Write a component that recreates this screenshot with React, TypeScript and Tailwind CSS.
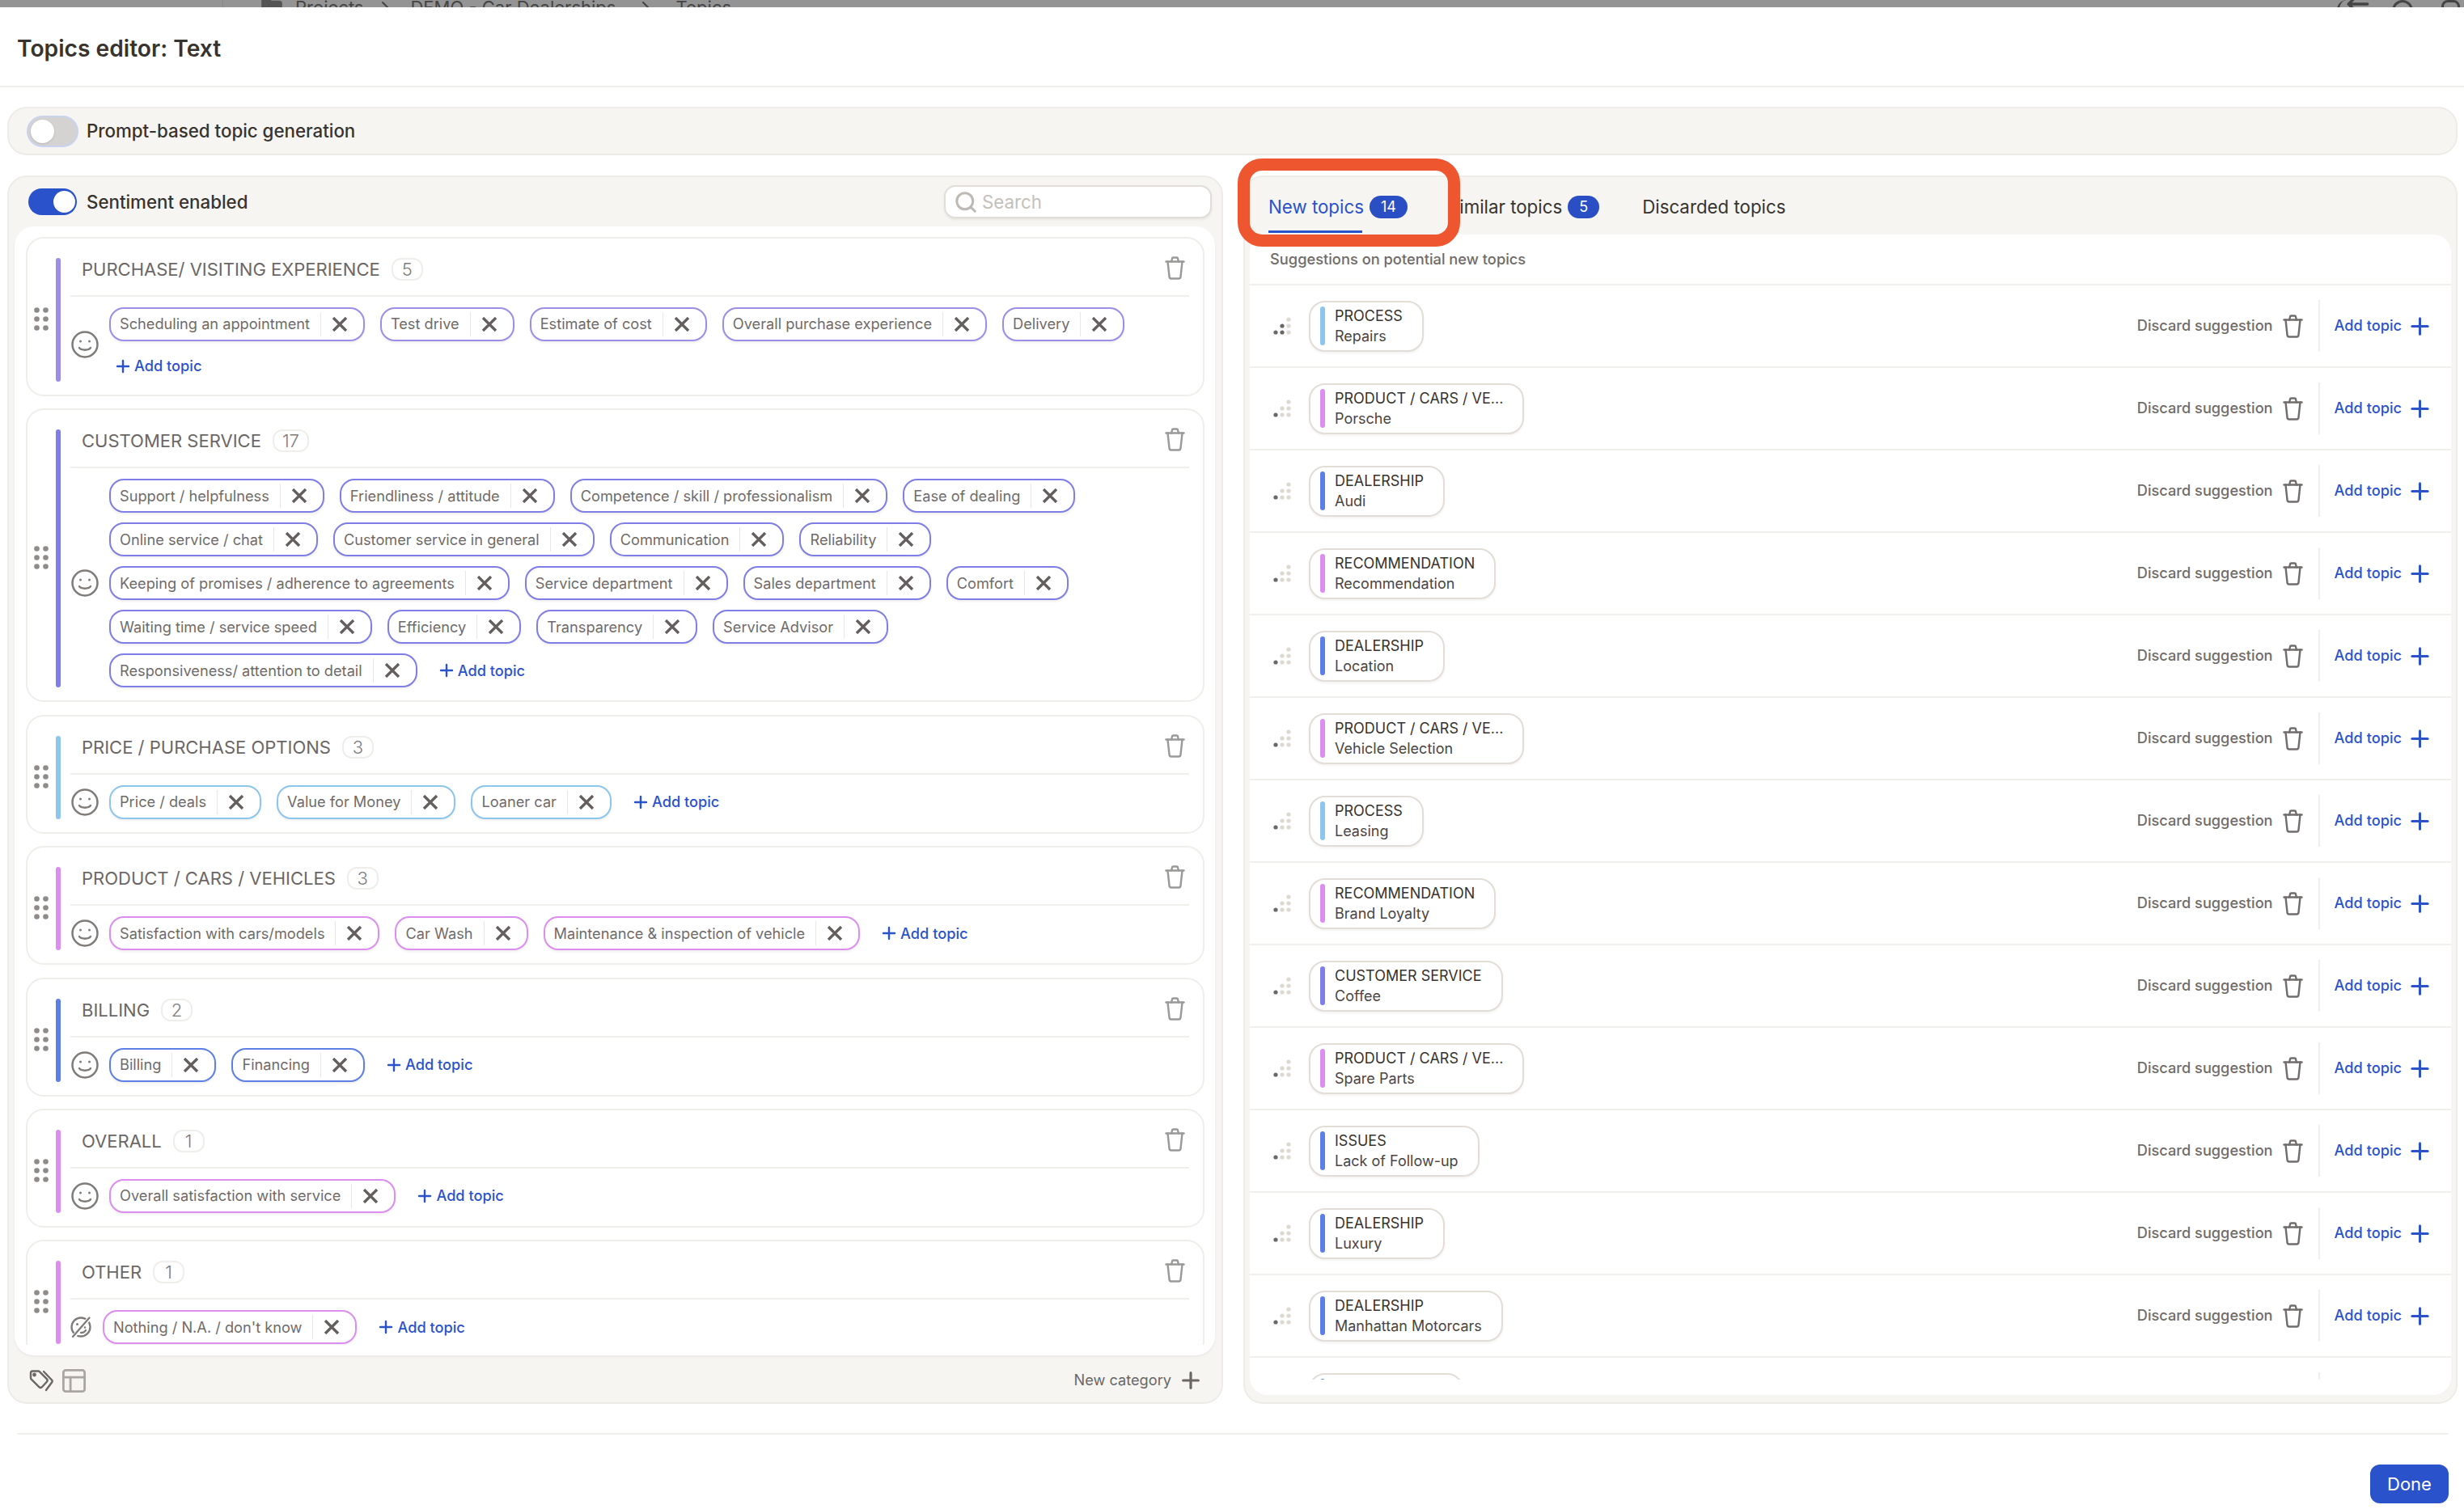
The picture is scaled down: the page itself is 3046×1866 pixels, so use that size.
import { ArrowLeft, ChevronRight, Folder, PanelsTopLeft, Plus, Search } from "lucide-react";

type Category = {
    name: string;
    count: number;
    bar: string;
    border: string;
    topics: string[];
    noSentiment?: boolean;
};

const categories: Category[] = [
    {
        name: "PURCHASE/ VISITING EXPERIENCE",
        count: 5,
        bar: "bg-[#9c8de8]",
        border: "border-[#9c8de8]",
        topics: ["Scheduling an appointment", "Test drive", "Estimate of cost", "Overall purchase experience", "Delivery"],
    },
    {
        name: "CUSTOMER SERVICE",
        count: 17,
        bar: "bg-[#7f7de6]",
        border: "border-[#7f7de6]",
        topics: [
            "Support / helpfulness",
            "Friendliness / attitude",
            "Competence / skill / professionalism",
            "Ease of dealing",
            "Online service / chat",
            "Customer service in general",
            "Communication",
            "Reliability",
            "Keeping of promises / adherence to agreements",
            "Service department",
            "Sales department",
            "Comfort",
            "Waiting time / service speed",
            "Efficiency",
            "Transparency",
            "Service Advisor",
            "Responsiveness/ attention to detail",
        ],
    },
    {
        name: "PRICE / PURCHASE OPTIONS",
        count: 3,
        bar: "bg-[#8cc6ec]",
        border: "border-[#8cc6ec]",
        topics: ["Price / deals", "Value for Money", "Loaner car"],
    },
    {
        name: "PRODUCT / CARS / VEHICLES",
        count: 3,
        bar: "bg-[#dc8df0]",
        border: "border-[#dc8df0]",
        topics: ["Satisfaction with cars/models", "Car Wash", "Maintenance & inspection of vehicle"],
    },
    {
        name: "BILLING",
        count: 2,
        bar: "bg-[#5c7fe6]",
        border: "border-[#5c7fe6]",
        topics: ["Billing", "Financing"],
    },
    {
        name: "OVERALL",
        count: 1,
        bar: "bg-[#dc8df0]",
        border: "border-[#dc8df0]",
        topics: ["Overall satisfaction with service"],
    },
    {
        name: "OTHER",
        count: 1,
        bar: "bg-[#dc8df0]",
        border: "border-[#dc8df0]",
        topics: ["Nothing / N.A. / don't know"],
        noSentiment: true,
    },
];

const suggestions = [
    { cat: "PROCESS", topic: "Repairs", bar: "bg-[#8cc6ec]", strength: 3 },
    { cat: "PRODUCT / CARS / VE...", topic: "Porsche", bar: "bg-[#dc8df0]", strength: 1 },
    { cat: "DEALERSHIP", topic: "Audi", bar: "bg-[#5c7fe6]", strength: 1 },
    { cat: "RECOMMENDATION", topic: "Recommendation", bar: "bg-[#dc8df0]", strength: 1 },
    { cat: "DEALERSHIP", topic: "Location", bar: "bg-[#5c7fe6]", strength: 1 },
    { cat: "PRODUCT / CARS / VE...", topic: "Vehicle Selection", bar: "bg-[#dc8df0]", strength: 1 },
    { cat: "PROCESS", topic: "Leasing", bar: "bg-[#8cc6ec]", strength: 1 },
    { cat: "RECOMMENDATION", topic: "Brand Loyalty", bar: "bg-[#dc8df0]", strength: 1 },
    { cat: "CUSTOMER SERVICE", topic: "Coffee", bar: "bg-[#7f7de6]", strength: 1 },
    { cat: "PRODUCT / CARS / VE...", topic: "Spare Parts", bar: "bg-[#dc8df0]", strength: 1 },
    { cat: "ISSUES", topic: "Lack of Follow-up", bar: "bg-[#5c7fe6]", strength: 1 },
    { cat: "DEALERSHIP", topic: "Luxury", bar: "bg-[#5c7fe6]", strength: 1 },
    { cat: "DEALERSHIP", topic: "Manhattan Motorcars", bar: "bg-[#5c7fe6]", strength: 1 },
    { cat: "ISSUES", topic: "Communication", bar: "bg-[#5c7fe6]", strength: 1 },
];

function TrashIcon({ className }: { className: string }) {
    return (
        <svg viewBox="0 0 25 29" fill="none" stroke="currentColor" strokeWidth="2.4" strokeLinecap="round" strokeLinejoin="round" className={className}>
            <path d="M1.5 6.5h22" />
            <path d="M3.5 6.5 5.5 25a2.5 2.5 0 0 0 2.5 2.5h9a2.5 2.5 0 0 0 2.5-2.5l2-18.5" />
            <path d="M8 6.5 9 3a1.5 1.5 0 0 1 1.5-1.5h4A1.5 1.5 0 0 1 16 3l1 3.5" />
        </svg>
    );
}

function DragDots() {
    return (
        <svg viewBox="0 0 18 29" className="-mt-[2px] h-[29px] w-[18px] fill-[#8f8b89]">
            {[3.5, 14.5].map((x) =>
                [3.5, 14.5, 25.5].map((y) => <circle key={`${x}-${y}`} cx={x} cy={y} r="3.3" />)
            )}
        </svg>
    );
}

function Smiley() {
    return (
        <svg viewBox="0 0 34 34" fill="none" stroke="#7f7b79" strokeWidth="2.5" strokeLinecap="round" className="ml-px h-[34px] w-[34px] shrink-0">
            <circle cx="17" cy="17" r="15.5" />
            <circle cx="11.5" cy="13" r="1.5" fill="#7f7b79" stroke="none" />
            <circle cx="22.5" cy="13" r="1.5" fill="#7f7b79" stroke="none" />
            <path d="M10 21c2 3.5 12 3.5 14 0" />
        </svg>
    );
}

function SmileyOff() {
    return (
        <svg viewBox="0 0 26 28" fill="none" stroke="#7f7b79" strokeWidth="2.3" strokeLinecap="round" className="h-[28px] w-[26px] shrink-0">
            <circle cx="13" cy="14" r="11.5" />
            <path d="M25 1 3 27" stroke="#ffffff" strokeWidth="5" />
            <path d="M23.5 2.5 3 26" />
            <circle cx="8.5" cy="10.5" r="1.5" fill="#7f7b79" stroke="none" />
            <circle cx="18" cy="14.5" r="1.3" fill="#7f7b79" stroke="none" />
            <path d="M13 21c2.5 0 5-1 6-3" />
        </svg>
    );
}

function Chip({ label, border }: { label: string; border: string }) {
    return (
        <div className={`flex h-[42px] items-center rounded-[18px] border-2 bg-white pl-[11px] pr-[19px] shadow-[0_2px_3px_rgba(60,50,40,0.08)] ${border}`}>
            <span className="text-[18.2px] text-[#6f6b6a]">{label}</span>
            <span className="ml-[13px] mr-[13px] h-[30px] w-px bg-[#e9e7e4]" />
            <svg viewBox="0 0 20 18" fill="none" stroke="#645f5e" strokeWidth="3.4" className="h-[18px] w-[20px]">
                <path d="M2 1l16 16M18 1 2 17" />
            </svg>
        </div>
    );
}

function AddTopic() {
    return (
        <div className="flex h-[38px] items-center gap-[2px] pl-[5px] text-[18.2px] font-medium text-[#2a52cb]">
            <Plus size={24} strokeWidth={2.4} />
            <span>Add topic</span>
        </div>
    );
}

function CategoryCard({ cat }: { cat: Category }) {
    return (
        <div className="flex shrink-0 rounded-[22px] border-2 border-[#f0eeea] bg-white pb-[16px] pt-[24px]">
            <div className="flex w-[35px] items-center justify-center pr-[2px]">
                <DragDots />
            </div>
            <div className={`w-[6px] rounded-full ${cat.bar}`} />
            <div className="ml-[12px] mr-[17px] flex-1">
                <div className="flex h-[48px] items-start justify-between border-b-2 border-[#f1efec] pl-[14px] pr-[5px]">
                    <div className="flex items-center gap-[14px]">
                        <span className="text-[22px] leading-[28px] text-[#6b6766]">{cat.name}</span>
                        <span className="flex h-[28px] min-w-[39px] items-center justify-center rounded-[12px] border-2 border-[#f0eeea] px-[10px] text-[22px] font-light leading-none text-[#7f7b79]">
                            {cat.count}
                        </span>
                    </div>
                    <TrashIcon className="-mt-[2px] h-[29px] w-[25px] text-[#9a9998]" />
                </div>
                <div className={`flex items-center pt-[13px] ${cat.noSentiment ? "gap-[14px]" : "gap-[13px]"}`}>
                    {cat.noSentiment ? <SmileyOff /> : <Smiley />}
                    <div className="flex flex-1 flex-wrap items-center gap-x-[19px] gap-y-[12px]">
                        {cat.topics.map((t) => (
                            <Chip key={t} label={t} border={cat.border} />
                        ))}
                        <AddTopic />
                    </div>
                </div>
            </div>
        </div>
    );
}

function StrengthDots({ strength }: { strength: number }) {
    const dots = [
        [4, 20],
        [12, 20],
        [12, 12],
        [20, 20],
        [20, 12],
        [20, 4],
    ];
    return (
        <svg viewBox="0 0 24 24" className="h-[24px] w-[24px] shrink-0">
            {dots.map(([x, y], i) => (
                <circle key={i} cx={x} cy={y} r="2.6" fill={i < strength ? "#6b6766" : "#ddd8d0"} />
            ))}
        </svg>
    );
}

function SuggestionRow({ s }: { s: (typeof suggestions)[number] }) {
    return (
        <div className="flex h-[102px] shrink-0 items-center border-b-2 border-[#f1efec] pl-[28px] pr-[22px]">
            <StrengthDots strength={s.strength} />
            <div className="ml-[21px] flex h-[63px] items-center rounded-[20px] border-2 border-[#e2ddd7] bg-white pl-[12px] pr-[24px] shadow-[0_2px_3px_rgba(60,50,40,0.06)]">
                <div className={`h-[48px] w-[6px] rounded-full ${s.bar}`} />
                <div className="ml-[12px] text-[18px] leading-[25px] text-[#4a4543]">
                    <div className="text-[#37332f]">{s.cat}</div>
                    <div>{s.topic}</div>
                </div>
            </div>
            <div className="ml-auto flex items-center">
                <span className="text-[18.2px] font-medium text-[#706c6b]">Discard suggestion</span>
                <TrashIcon className="ml-[12px] h-[29px] w-[25px] text-[#716d6c]" />
                <span className="ml-[19px] h-[64px] w-[2px] bg-[#f1efec]" />
                <span className="ml-[18px] text-[18.2px] font-medium text-[#2a52cb]">Add topic</span>
                <Plus size={33} strokeWidth={2.2} className="ml-[6px] text-[#2a52cb]" />
            </div>
        </div>
    );
}

function CountBadge({ n, wide }: { n: number; wide?: boolean }) {
    return (
        <span className={`flex h-[28px] items-center justify-center rounded-full bg-[#2a4fc4] text-[18px] leading-none text-white ${wide ? "w-[47px]" : "w-[39px]"}`}>
            {n}
        </span>
    );
}

export default function App() {
    return (
        <div className="relative flex h-[1866px] w-[3046px] flex-col overflow-hidden bg-white font-['Inter',sans-serif]">
            {/* page behind the modal */}
            <div className="flex h-[9px] shrink-0 items-start overflow-hidden bg-[#949494] text-[22px] leading-[22px] text-[#444]">
                <div className="h-full w-[276px] border-r border-[#888]" />
                <div className="-mt-[5px] ml-[46px] flex items-center gap-[15px]">
                    <Folder size={28} fill="#555" stroke="#555" />
                    <span>Projects</span>
                    <ChevronRight size={24} />
                    <span className="ml-[4px]">DEMO - Car Dealerships</span>
                    <ChevronRight size={24} className="ml-[10px]" />
                    <span className="ml-[10px]">Topics</span>
                </div>
                <div className="ml-auto mr-[5px] flex items-start">
                    <span className="h-[28px] w-[12px] rounded-l-full border-l-[3px] border-[#444]" />
                    <ArrowLeft size={40} className="-ml-[6px] -mt-[15px]" />
                    <span className="ml-[22px] h-[28px] w-[26px] rounded-full border-[3px] border-[#444]" />
                    <span className="ml-[35px] h-[28px] w-[23px] rounded-[8px] border-[3px] border-[#444]" />
                </div>
            </div>

            <div className="flex h-[99px] shrink-0 items-center border-b-2 border-[#f1efec] pl-[21px] pt-[5px]">
                <h1 className="text-[28.2px] font-semibold text-[#37332f]">Topics editor: Text</h1>
            </div>

            <div className="ml-[9px] mr-[8px] mt-[24px] flex h-[60px] shrink-0 items-center gap-[10px] rounded-[24px] border-2 border-[#efece7] bg-[#f6f5f2] pl-[22px]">
                <div className="flex h-[39px] w-[64px] items-center rounded-full border-2 border-[#c9d3ef] bg-[#d4d3d1] pl-[3px]">
                    <span className="h-[29px] w-[29px] rounded-full bg-white shadow" />
                </div>
                <span className="text-[22.3px] font-medium text-[#37332f]">Prompt-based topic generation</span>
            </div>

            <div className="ml-[9px] mr-[8px] mt-[25px] flex h-[1519px] shrink-0 gap-[25px]">
                {/* categories */}
                <div className="flex w-[1503px] flex-col rounded-[24px] border-2 border-[#efece7] bg-[#f6f5f2]">
                    <div className="flex h-[61px] shrink-0 items-center justify-between pl-[24px] pr-[12px]">
                        <div className="flex items-center gap-[12px]">
                            <div className="flex h-[33px] w-[60px] items-center justify-end rounded-full bg-[#2a52cb] pr-[2px]">
                                <span className="h-[27px] w-[27px] rounded-full bg-white" />
                            </div>
                            <span className="text-[22.3px] font-medium text-[#37332f]">Sentiment enabled</span>
                        </div>
                        <div className="flex h-[41px] w-[331px] items-center gap-[5px] rounded-[14px] border-2 border-[#e2ddd7] bg-white pl-[10px] shadow-[0_2px_3px_rgba(60,50,40,0.08)]">
                            <Search size={30} strokeWidth={2.4} className="text-[#bdbab5]" />
                            <span className="text-[22.3px] text-[#c4c0ba]">Search</span>
                        </div>
                    </div>
                    <div className="ml-[7px] mr-[8px] min-h-0 flex-1 rounded-[24px] bg-white pb-[13px] pl-[14px] pr-[13px] pt-[13px] shadow-[0_2px_3px_rgba(60,50,40,0.06)]">
                        <div className="flex h-full flex-col gap-[15.4px] overflow-hidden">
                            {categories.map((c) => (
                                <CategoryCard key={c.name} cat={c} />
                            ))}
                        </div>
                    </div>
                    <div className="flex h-[58px] shrink-0 items-center pl-[25px] pr-[22px] pt-[4px]">
                        <svg viewBox="0 0 30 27" fill="none" stroke="#6b6766" strokeWidth="2.4" strokeLinecap="round" strokeLinejoin="round" className="h-[27px] w-[30px]">
                            <path d="M2 3.5Q2 1.5 4 1.5h7a2.5 2.5 0 0 1 1.8.7l9 9a2.5 2.5 0 0 1 0 3.5l-6 6.5a2.5 2.5 0 0 1-3.5 0l-9.5-9.5a2.5 2.5 0 0 1-.8-1.8z" />
                            <circle cx="6.5" cy="6" r="1.2" />
                            <path d="M18 2l10 10.5a2 2 0 0 1 0 3L21 25" />
                        </svg>
                        <PanelsTopLeft size={35} strokeWidth={1.9} className="ml-[8px] text-[#aaa5a2]" />
                        <span className="ml-auto text-[18.2px] text-[#6b6766]">New category</span>
                        <Plus size={32} strokeWidth={2.4} className="ml-[8px] text-[#6b6766]" />
                    </div>
                </div>

                {/* suggestions */}
                <div className="flex flex-1 flex-col rounded-[24px] border-2 border-[#efece7] bg-[#f6f5f2]">
                    <div className="flex h-[71px] shrink-0 items-start pl-[29px]">
                        <div className="relative mt-[22px] flex items-center gap-[7px]">
                            <span className="text-[22.3px] leading-[30px] text-[#2a52cb]">New topics</span>
                            <CountBadge n={14} wide />
                            <span className="absolute left-0 top-[44px] h-[3px] w-[116px] bg-[#2a52cb]" />
                        </div>
                        <div className="ml-[50px] mt-[22px] flex items-center gap-[7px]">
                            <span className="text-[22.3px] leading-[30px] text-[#37332f]">Similar topics</span>
                            <CountBadge n={5} />
                        </div>
                        <div className="ml-[53px] mt-[22px] text-[22.3px] leading-[30px] text-[#37332f]">Discarded topics</div>
                    </div>
                    <div className="mb-[9px] ml-[6px] mr-[6px] flex min-h-0 flex-1 flex-col rounded-[22px] bg-white pb-[19px]">
                        <div className="flex h-[63px] shrink-0 items-center border-b-2 border-[#f1efec] pl-[25px] text-[18.3px] font-medium text-[#6f6b6a]">
                            Suggestions on potential new topics
                        </div>
                        <div className="flex min-h-0 flex-1 flex-col overflow-hidden">
                            {suggestions.map((s, i) => (
                                <SuggestionRow key={i} s={s} />
                            ))}
                        </div>
                    </div>
                </div>
            </div>

            <div className="ml-[21px] mr-[19px] mt-[36px] shrink-0 border-t-2 border-[#f1efec]" />
            <div className="mr-[19px] mt-[37px] flex shrink-0 justify-end">
                <button className="h-[48px] w-[97px] rounded-[12px] bg-[#2a52cb] text-[22px] text-white">Done</button>
            </div>

            {/* red annotation box drawn over the tabs */}
            <div className="absolute left-[1530px] top-[196px] h-[109px] w-[275px] rounded-[30px] border-[15px] border-[#ee562f]" />
        </div>
    );
}
